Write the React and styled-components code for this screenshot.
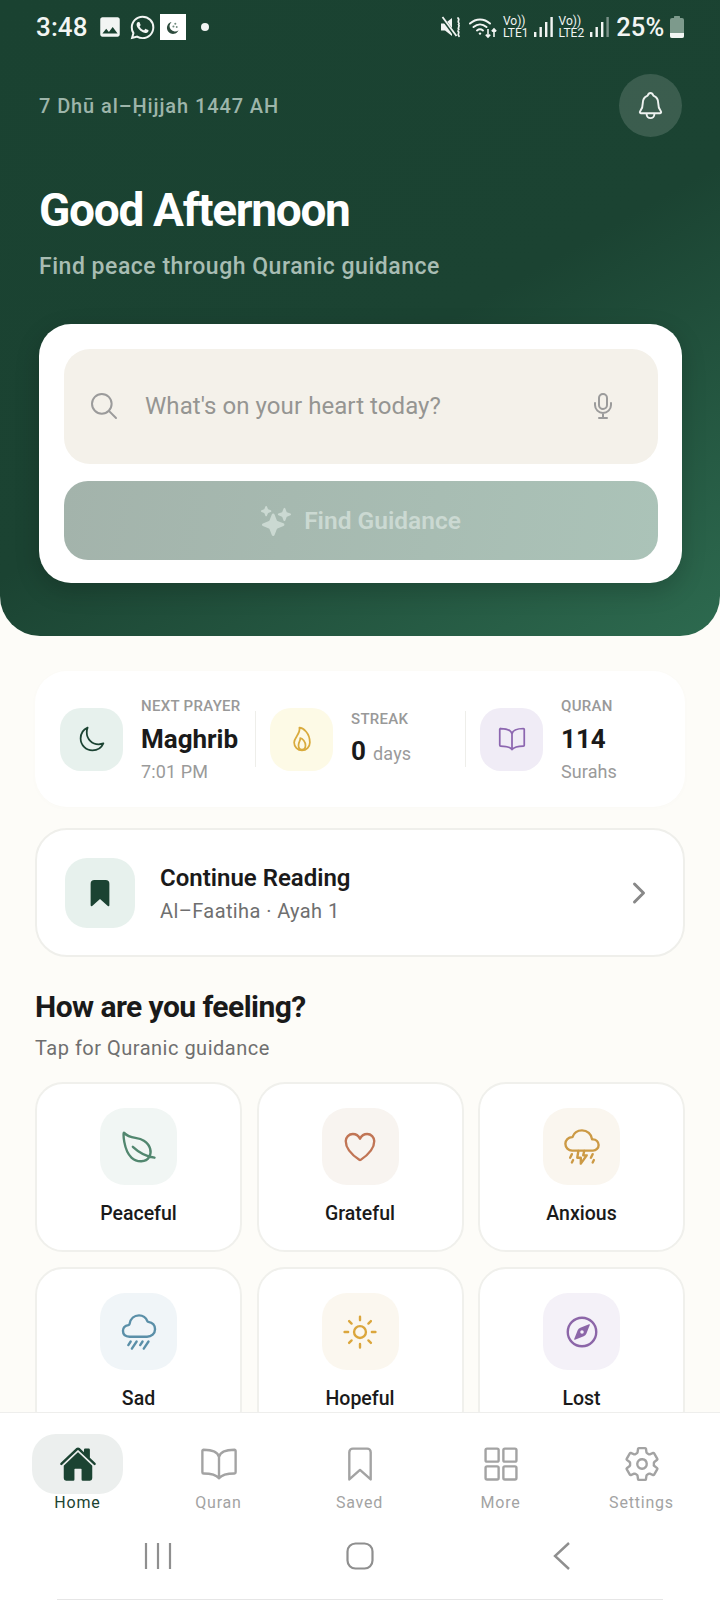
import React from 'react';
import styled, { createGlobalStyle } from 'styled-components';
import {
  IoNotificationsOutline, IoSearchOutline, IoMicOutline, IoSparkles, IoMoonOutline, IoFlameOutline,
  IoBookOutline, IoBookmark, IoBookmarkOutline, IoChevronForward, IoLeafOutline, IoHeartOutline,
  IoThunderstormOutline, IoRainyOutline, IoSunnyOutline, IoCompassOutline, IoHome, IoGridOutline,
  IoSettingsOutline, IoLogoWhatsapp,
} from 'react-icons/io5';
import { MdImage } from 'react-icons/md';

const Global = createGlobalStyle`
  html, body { margin: 0; padding: 0; background: #fdfcf8; }
  * { box-sizing: border-box; }
  body { font-family: Roboto, "Noto Sans", sans-serif; }
`;

const Screen = styled.div`
  width: 720px; height: 1600px; display: flex; flex-direction: column; overflow: hidden; background: #fdfcf8;
`;
const Scroll = styled.main`flex: 1; min-height: 0; overflow: hidden;`;

const Hero = styled.header`
  height: 636px; padding: 0 38px 0 39px; color: #fff;
  background: linear-gradient(150deg, #1a4231 0%, #1b4332 55%, #2d6a4f 100%);
  border-radius: 0 0 40px 40px; display: flex; flex-direction: column;
`;
const StatusBar = styled.div`
  height: 54px; margin: 0 -2px 0 -3px; display: flex; align-items: center; justify-content: space-between; color: #f2f5f3;
`;
const StatusGroup = styled.div`display: flex; align-items: center; gap: ${p => p.$gap || 6}px;`;
const Clock = styled.span`font-size: 26px; font-weight: 500; margin-right: 3px; letter-spacing: .1px;`;
const AppTile = styled.span`width: 26px; height: 26px; margin-left: -2px; background: #fff; display: flex; align-items: center; justify-content: center;`;
const Dot = styled.span`width: 8px; height: 8px; border-radius: 50%; background: #f2f5f3; margin-left: 9px;`;
const Lte = styled.span`display: flex; flex-direction: column; align-items: center; font-size: 12px; line-height: 12px; font-weight: 400;`;
const Percent = styled.span`font-size: 25.5px; font-weight: 500; letter-spacing: .2px; margin-left: 2px;`;
const WifiSlot = styled.span`display: flex; margin-left: 2px;`;

const DateRow = styled.div`display: flex; align-items: center; justify-content: space-between; height: 64px; margin-top: 19px;`;
const DateText = styled.span`font-size: 20px; font-weight: 500; color: #9db5aa; letter-spacing: .9px; margin-top: 1px;`;
const BellButton = styled.span`
  width: 63px; height: 63px; border-radius: 50%; background: rgba(255,255,255,.14);
  display: flex; align-items: center; justify-content: center; color: #eef2f0; font-size: 31px;
`;
const Greeting = styled.h1`margin: 46px 0 0; font-size: 46px; line-height: 54px; font-weight: 700; letter-spacing: -1.3px; color: #fff;`;
const Tagline = styled.p`margin: 16px 0 0; font-size: 23px; line-height: 28px; font-weight: 500; color: #a8bdb3; letter-spacing: .52px;`;

const SearchCard = styled.section`
  margin-top: 43px; height: 259px; background: #fff; border-radius: 32px; padding: 25px 24px 23px 25px;
  box-shadow: 0 8px 24px rgba(0,0,0,.18); display: flex; flex-direction: column; gap: 17px;
`;
const InputBox = styled.div`
  height: 115px; border-radius: 26px; background: #f4f1ea; display: flex; align-items: center;
  padding: 0 39px 2px 24px; color: #9b9b9b;
`;
const Placeholder = styled.span`flex: 1; margin-left: 25px; font-size: 24px; font-weight: 400; color: #959592; letter-spacing: .07px;`;
const FindButton = styled.div`
  height: 79px; border-radius: 24px; background: linear-gradient(100deg, #a3b3ab, #abc3b8);
  display: flex; align-items: center; justify-content: center; gap: 13px; color: #cbd9d2;
  font-size: 24.5px; font-weight: 600;
`;

const Body = styled.div`padding: 35px 35px 0;`;
const StatsCard = styled.section`
  height: 136px; background: #fff; border-radius: 32px; padding: 0 9px 0 25px; display: grid;
  grid-template-columns: repeat(3, 196px); column-gap: 14px; align-items: center;
  box-shadow: 0 1px 6px rgba(0,0,0,.015);
`;
const Stat = styled.div`
  display: flex; align-items: center; gap: 18px; height: 56px;
  border-right: ${p => (p.$last ? 'none' : '1px solid #eeeeea')};
`;
const StatIcon = styled.span`
  width: 63px; height: 63px; flex: none; border-radius: 21px; background: ${p => p.$bg}; color: ${p => p.$fg};
  display: flex; align-items: center; justify-content: center; font-size: 28px;
`;
const StatText = styled.div`display: flex; flex-direction: column; white-space: nowrap;`;
const StatLabel = styled.span`font-size: 15px; line-height: 20px; font-weight: 500; color: #999; letter-spacing: .3px; margin-top: ${p => (p.$streak ? 6 : 2)}px; margin-bottom: ${p => (p.$streak ? -1 : 0)}px;`;
const StatValue = styled.span`font-size: 26px; line-height: 36px; font-weight: 700; color: #1a1a1a; margin: 5px 0 3px;`;
const StatSub = styled.span`font-size: 18px; line-height: 24px; color: #9a9a9a; letter-spacing: .1px;`;
const Days = styled.span`font-size: 18px; font-weight: 400; color: #9a9a9a; margin-left: 7px; letter-spacing: .2px;`;

const ReadingCard = styled.section`
  margin-top: 21px; height: 129px; background: #fff; border: 2px solid #efefeb; border-radius: 32px;
  display: flex; align-items: center; padding: 0 28px 0 28px;
`;
const ReadingIcon = styled.span`
  width: 70px; height: 70px; border-radius: 22px; background: #e7f1ed; color: #1b4332;
  display: flex; align-items: center; justify-content: center; font-size: 30px; flex: none;
`;
const ReadingText = styled.div`flex: 1; margin-left: 25px; display: flex; flex-direction: column;`;
const ReadingTitle = styled.span`font-size: 24px; line-height: 32px; font-weight: 600; color: #1a1a1a;`;
const ReadingSub = styled.span`font-size: 20px; line-height: 26px; margin-top: 4px; color: #6f6f6f; letter-spacing: .4px;`;
const Chevron = styled.span`color: #888; font-size: 32px; display: flex;`;

const SectionTitle = styled.h2`margin: 30px 0 0; font-size: 30px; line-height: 40px; font-weight: 700; color: #1a1a1a; letter-spacing: -.55px;`;
const SectionSub = styled.p`margin: 8px 0 0; font-size: 20px; line-height: 26px; color: #6f6f6f; letter-spacing: .5px;`;
const MoodGrid = styled.div`margin-top: 21px; display: grid; grid-template-columns: repeat(3, 1fr); gap: 15px 14.5px;`;
const MoodCard = styled.div`
  height: 170px; background: #fff; border: 2px solid #f0f0ec; border-radius: 28px; padding-top: 24px;
  display: flex; flex-direction: column; align-items: center;
`;
const MoodIcon = styled.span`
  width: 77px; height: 77px; border-radius: 25px; background: ${p => p.$bg}; color: ${p => p.$fg};
  display: flex; align-items: center; justify-content: center; font-size: 38px;
`;
const MoodLabel = styled.span`margin-top: 16px; font-size: 19.5px; line-height: 26px; font-weight: 500; color: #1a1a1a;`;

const BottomNav = styled.nav`
  flex: none; height: 188px; background: #fff; border-top: 1px solid #eeeeec; display: flex; flex-direction: column;
`;
const Tabs = styled.div`display: grid; grid-template-columns: repeat(5, 141px); padding: 21px 6px 0 7px;`;
const Tab = styled.div`display: flex; flex-direction: column; align-items: center; color: ${p => (p.$active ? '#1b4332' : '#a3a3a3')};`;
const TabIcon = styled.span`
  width: 91px; height: 60px; border-radius: 24px; background: ${p => (p.$active ? '#ecefee' : 'transparent')};
  display: flex; align-items: center; justify-content: center; font-size: 38px;
`;
const TabLabel = styled.span`font-size: 16px; line-height: 20px; font-weight: 400; letter-spacing: .8px; margin-top: -1px;`;
const SystemBar = styled.div`
  flex: 1; display: grid; grid-template-columns: repeat(3, 202px); justify-content: center; justify-items: center; align-items: center;
  padding: 14px 0 14px; color: #8f8f8f;
`;
const SystemWrap = styled.div`flex: 1; display: flex; flex-direction: column;`;
const HomeIndicator = styled.div`height: 1px; margin: 0 57px; background: #e6e6e6;`;

const Muted = () => (
  <svg width="21" height="24" viewBox="0 0 21 24" fill="none">
    <path d="M0 8.5h4L11 3v18l-7-5.5H0z" fill="currentColor" />
    <path d="M1 2.5 15 21.5" stroke="#1c4533" strokeWidth="3.5" />
    <path d="M1.5 2 15.5 21" stroke="currentColor" strokeWidth="1.8" />
    <path d="M17 3c2.6 2-1.6 3.2 1 5.4M17 16c2.6 2-1.6 3.2 1 5.2" stroke="currentColor" strokeWidth="1.8" strokeLinecap="round" />
    <path d="M17.5 9.5c2 1.5-1.5 3.5.3 5" stroke="currentColor" strokeWidth="1.8" strokeLinecap="round" />
  </svg>
);
const Wifi = () => (
  <svg width="28" height="24" viewBox="0 0 28 24" fill="none" stroke="currentColor" strokeWidth="2" strokeLinecap="round">
    <path d="M1 8.5C7 3 15 3 21 8.5" />
    <path d="M4.5 12C8.5 8.5 13.5 8.5 17.5 12" />
    <path d="M8 15.5c2-1.6 4-1.6 6 0" />
    <circle cx="11" cy="18.6" r="1.2" fill="currentColor" stroke="none" />
    <path d="M19 14v8m-2.2-2.4L19 22l2.2-2.4M25 22v-8m-2.2 2.4L25 14l2.2 2.4" strokeWidth="1.6" strokeLinecap="butt" />
  </svg>
);
const Signal = ({ dim }) => (
  <svg width="19" height="21" viewBox="0 0 19 21" fill="currentColor">
    <rect x="0" y="15" width="2.4" height="5" />
    <rect x="5.5" y="10" width="2.4" height="10" />
    <rect x="11" y="5" width="2.4" height="15" />
    <rect x="16.4" y="0" width="2.4" height="20" opacity={dim ? 0.45 : 1} />
  </svg>
);
const Battery = () => (
  <svg width="14" height="22" viewBox="0 0 14 22">
    <rect x="4" y="0" width="6" height="2" rx=".6" fill="#7d9a8c" />
    <rect x="0" y="2" width="14" height="20" rx="2" fill="#7d9a8c" />
    <path d="M0 17h14v3a2 2 0 0 1-2 2H2a2 2 0 0 1-2-2z" fill="#f2f5f3" />
  </svg>
);
const Crescent = () => (
  <svg width="15" height="15" viewBox="0 0 16 16">
    <path d="M7 2a6.5 6.5 0 1 0 7.5 9A5.6 5.6 0 0 1 7 2z" fill="#2c4a3c" />
    <circle cx="11" cy="4" r="1.1" fill="#6f8a7d" />
    <circle cx="9" cy="7" r="1.1" fill="#6f8a7d" />
    <circle cx="12.5" cy="7.5" r="1" fill="#6f8a7d" />
  </svg>
);
const Recents = () => (
  <svg width="28" height="28" viewBox="0 0 28 28" stroke="currentColor" strokeWidth="2.2"><path d="M2 1v26M14 1v26M26 1v26" /></svg>
);
const HomeKey = () => (
  <svg width="28" height="28" viewBox="0 0 28 28" fill="none" stroke="currentColor" strokeWidth="2.2"><rect x="1.5" y="1.5" width="25" height="25" rx="8" /></svg>
);
const BackKey = () => (
  <svg width="18" height="30" viewBox="0 0 18 30" fill="none" stroke="currentColor" strokeWidth="2.4"><path d="M16 2 2 15l14 13" /></svg>
);

const moods = [
  ['Peaceful', IoLeafOutline, '#f1f6f4', '#52876f'],
  ['Grateful', IoHeartOutline, '#f8f4f0', '#c17555'],
  ['Anxious', IoThunderstormOutline, '#faf6ef', '#cc9a45'],
  ['Sad', IoRainyOutline, '#f0f5f8', '#5a8fa8'],
  ['Hopeful', IoSunnyOutline, '#fbf7ef', '#dba63c'],
  ['Lost', IoCompassOutline, '#f4f1f8', '#8c66a8'],
];
const tabs = [
  ['Home', IoHome, true],
  ['Quran', IoBookOutline],
  ['Saved', IoBookmarkOutline],
  ['More', IoGridOutline],
  ['Settings', IoSettingsOutline],
];

export default function App() {
  return (
    <Screen>
      <Global />
      <Scroll>
        <Hero>
          <StatusBar>
            <StatusGroup>
              <Clock>3:48</Clock>
              <MdImage size={26} />
              <IoLogoWhatsapp size={27} />
              <AppTile><Crescent /></AppTile>
              <Dot />
            </StatusGroup>
            <StatusGroup $gap={5.5}>
              <Muted />
              <WifiSlot><Wifi /></WifiSlot>
              <Lte>Vo))<br />LTE1</Lte>
              <Signal />
              <Lte>Vo))<br />LTE2</Lte>
              <Signal dim />
              <Percent>25%</Percent>
              <Battery />
            </StatusGroup>
          </StatusBar>
          <DateRow>
            <DateText>7 Dhū al–Ḥijjah 1447 AH</DateText>
            <BellButton><IoNotificationsOutline /></BellButton>
          </DateRow>
          <Greeting>Good Afternoon</Greeting>
          <Tagline>Find peace through Quranic guidance</Tagline>
          <SearchCard>
            <InputBox>
              <IoSearchOutline size={32} />
              <Placeholder>What's on your heart today?</Placeholder>
              <IoMicOutline size={32} />
            </InputBox>
            <FindButton><IoSparkles size={30} />Find Guidance</FindButton>
          </SearchCard>
        </Hero>
        <Body>
          <StatsCard>
            <Stat>
              <StatIcon $bg="#e7f1ed" $fg="#1b4332"><IoMoonOutline /></StatIcon>
              <StatText>
                <StatLabel>NEXT PRAYER</StatLabel>
                <StatValue>Maghrib</StatValue>
                <StatSub>7:01 PM</StatSub>
              </StatText>
            </Stat>
            <Stat>
              <StatIcon $bg="#fdfae6" $fg="#d9ab3d"><IoFlameOutline /></StatIcon>
              <StatText>
                <StatLabel $streak>STREAK</StatLabel>
                <StatValue>0<Days>days</Days></StatValue>
              </StatText>
            </Stat>
            <Stat $last>
              <StatIcon $bg="#f0ecf6" $fg="#8c66b0"><IoBookOutline /></StatIcon>
              <StatText>
                <StatLabel>QURAN</StatLabel>
                <StatValue>114</StatValue>
                <StatSub>Surahs</StatSub>
              </StatText>
            </Stat>
          </StatsCard>
          <ReadingCard>
            <ReadingIcon><IoBookmark /></ReadingIcon>
            <ReadingText>
              <ReadingTitle>Continue Reading</ReadingTitle>
              <ReadingSub>Al–Faatiha · Ayah 1</ReadingSub>
            </ReadingText>
            <Chevron><IoChevronForward /></Chevron>
          </ReadingCard>
          <SectionTitle>How are you feeling?</SectionTitle>
          <SectionSub>Tap for Quranic guidance</SectionSub>
          <MoodGrid>
            {moods.map(([label, Icon, bg, fg]) => (
              <MoodCard key={label}>
                <MoodIcon $bg={bg} $fg={fg}><Icon /></MoodIcon>
                <MoodLabel>{label}</MoodLabel>
              </MoodCard>
            ))}
          </MoodGrid>
        </Body>
      </Scroll>
      <BottomNav>
        <Tabs>
          {tabs.map(([label, Icon, active]) => (
            <Tab key={label} $active={active}>
              <TabIcon $active={active}><Icon /></TabIcon>
              <TabLabel>{label}</TabLabel>
            </Tab>
          ))}
        </Tabs>
        <SystemWrap>
          <SystemBar>
            <Recents />
            <HomeKey />
            <BackKey />
          </SystemBar>
          <HomeIndicator />
        </SystemWrap>
      </BottomNav>
    </Screen>
  );
}
